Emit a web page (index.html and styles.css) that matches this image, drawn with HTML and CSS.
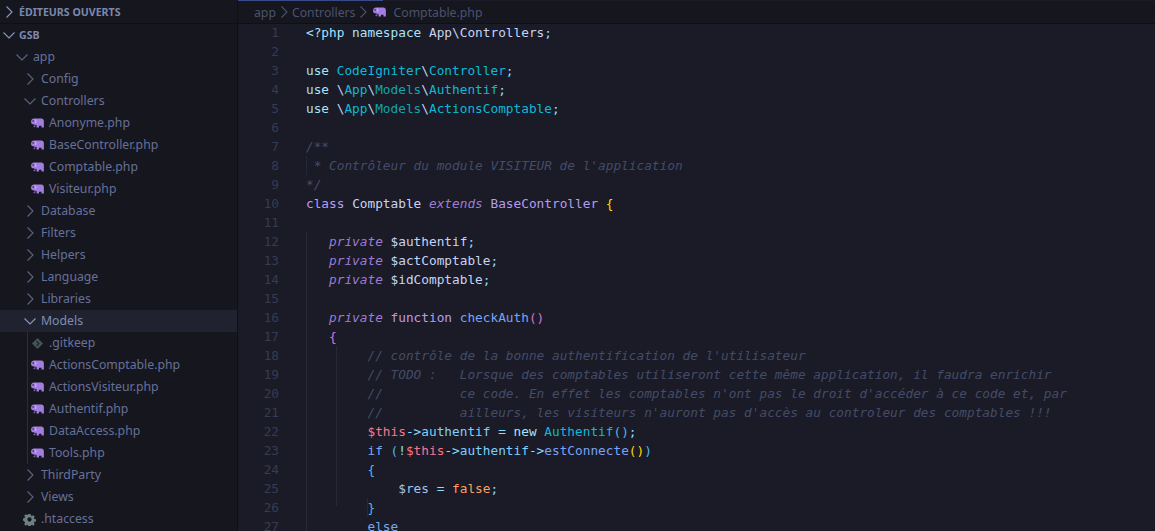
FILE: index.html
```html
<!DOCTYPE html>
<html lang="fr">
<head>
<meta charset="utf-8">
<title>GSB</title>
<link rel="stylesheet" href="styles.css">
</head>
<body>
<svg class="defs" width="0" height="0" aria-hidden="true">
  <defs>
    <symbol id="elephant" viewBox="0 0 14 11">
      <path d="M5 .5h6.2C12.8.5 14 1.7 14 3.3V10.5h-2.6V8.6H8.6v1.9H6V7.9C5.4 7.6 5 7.4 4.6 7.4V9c0 .7-.4 1.1-1.1 1.1S2.500 9.700 2.500 9.100h.8c0 .2 0 .3.200.3s.3-.1.300-.4V7.100C2 7.300.4 6.700 0 5.300V3.200C.1 1.500 1.600.5 3 .5z" fill="#a37ee0"/>
      <circle cx="2.200" cy="3.300" r=".8" fill="#16161e"/>
      <path d="M4.500 1.500C5.500 2.500 5.500 4.500 4.500 5.500" stroke="#d8c4ff" stroke-width=".9" fill="none"/>
    </symbol>
    <symbol id="chev-right" viewBox="0 0 16 16"><path d="M5.500 2.500 11 8l-5.500 5.500" fill="none" stroke="currentColor" stroke-width="1.100"/></symbol>
    <symbol id="chev-down" viewBox="0 0 16 16"><path d="M2.500 5.500 8 11l5.500-5.500" fill="none" stroke="currentColor" stroke-width="1.100"/></symbol>
  </defs>
</svg>
<div class="window">
  <aside class="sidebar">
    <div class="section-head open-editors">
      <svg class="chev bright"><use href="#chev-right"/></svg>
      <span>ÉDITEURS OUVERTS</span>
    </div>
    <div class="section-head root">
      <svg class="chev bright"><use href="#chev-down"/></svg>
      <span>GSB</span>
    </div>
    <ul class="tree">
      <li class="row d1"><svg class="chev"><use href="#chev-down"/></svg><span>app</span></li>
      <li class="row d2"><svg class="chev"><use href="#chev-right"/></svg><span>Config</span></li>
      <li class="row d2"><svg class="chev"><use href="#chev-down"/></svg><span>Controllers</span></li>
      <li class="row file"><svg class="ficon"><use href="#elephant"/></svg><span>Anonyme.php</span></li>
      <li class="row file"><svg class="ficon"><use href="#elephant"/></svg><span>BaseController.php</span></li>
      <li class="row file"><svg class="ficon"><use href="#elephant"/></svg><span>Comptable.php</span></li>
      <li class="row file"><svg class="ficon"><use href="#elephant"/></svg><span>Visiteur.php</span></li>
      <li class="row d2"><svg class="chev"><use href="#chev-right"/></svg><span>Database</span></li>
      <li class="row d2"><svg class="chev"><use href="#chev-right"/></svg><span>Filters</span></li>
      <li class="row d2"><svg class="chev"><use href="#chev-right"/></svg><span>Helpers</span></li>
      <li class="row d2"><svg class="chev"><use href="#chev-right"/></svg><span>Language</span></li>
      <li class="row d2"><svg class="chev"><use href="#chev-right"/></svg><span>Libraries</span></li>
      <li class="row d2 hover"><svg class="chev bright"><use href="#chev-down"/></svg><span>Models</span></li>
      <li class="group">
        <ul class="tree guided">
          <li class="row file"><svg class="ficon git" viewBox="0 0 14 14"><path d="M7 1l6 6-6 6-6-6z" fill="#3f5557"/><path d="M6 4.500l2.500 2.500L6 9.500" stroke="#1a2426" stroke-width="1.300" fill="none"/></svg><span>.gitkeep</span></li>
          <li class="row file"><svg class="ficon"><use href="#elephant"/></svg><span>ActionsComptable.php</span></li>
          <li class="row file"><svg class="ficon"><use href="#elephant"/></svg><span>ActionsVisiteur.php</span></li>
          <li class="row file"><svg class="ficon"><use href="#elephant"/></svg><span>Authentif.php</span></li>
          <li class="row file"><svg class="ficon"><use href="#elephant"/></svg><span>DataAccess.php</span></li>
          <li class="row file"><svg class="ficon"><use href="#elephant"/></svg><span>Tools.php</span></li>
        </ul>
      </li>
      <li class="row d2"><svg class="chev"><use href="#chev-right"/></svg><span>ThirdParty</span></li>
      <li class="row d2"><svg class="chev"><use href="#chev-right"/></svg><span>Views</span></li>
      <li class="row gear-row"><svg class="gear" viewBox="0 0 14 14"><path d="M5.800 1h2.400l.3 1.700 1 .5 1.500-.9 1.700 1.700-1 1.400.5 1 1.800.4v2.400l-1.800.3-.5 1.100 1 1.500-1.700 1.600-1.500-1-1 .5-.3 1.800H5.800l-.4-1.800-1-.5-1.400 1-1.700-1.600.9-1.500-.5-1.100L0 8.200V5.800l1.700-.4.500-1-.9-1.400L3 1.300l1.400.9 1-.5z" fill="#6d8086"/><circle cx="7" cy="7" r="2.300" fill="#16161e"/></svg><span>.htaccess</span></li>
    </ul>
  </aside>
  <main class="editor">
    <div class="progress"></div>
    <nav class="crumbs">
      <span>app</span><svg class="sep"><use href="#chev-right"/></svg>
      <span>Controllers</span><svg class="sep"><use href="#chev-right"/></svg>
      <svg class="ficon crumb-icon"><use href="#elephant"/></svg><span>Comptable.php</span>
    </nav>
    <div class="code-wrap">
      <ol class="gutter">
        <li>1</li><li>2</li><li>3</li><li>4</li><li>5</li><li>6</li><li>7</li><li>8</li><li>9</li>
        <li>10</li><li>11</li><li>12</li><li>13</li><li>14</li><li>15</li><li>16</li><li>17</li><li>18</li>
        <li>19</li><li>20</li><li>21</li><li>22</li><li>23</li><li>24</li><li>25</li><li>26</li><li>27</li>
      </ol>
      <div class="code">
        <i class="guide g-a"></i><i class="guide g-b"></i><i class="guide g-c"></i><i class="guide g-d"></i>
        <pre><span class="kw2">&lt;?php namespace</span> <span class="fg">App\Controllers</span><span class="op">;</span>

<span class="kw2">use</span> <span class="ty">CodeIgniter</span><span class="fg">\</span><span class="ty">Controller</span><span class="op">;</span>
<span class="kw2">use</span> <span class="fg">\</span><span class="ty">App</span><span class="fg">\</span><span class="ty2">Models</span><span class="fg">\</span><span class="ty">Authentif</span><span class="op">;</span>
<span class="kw2">use</span> <span class="fg">\</span><span class="ty">App</span><span class="fg">\</span><span class="ty2">Models</span><span class="fg">\</span><span class="ty">ActionsComptable</span><span class="op">;</span>

<span class="cm">/**
 * Contrôleur du module VISITEUR de l'application
*/</span>
<span class="kw">class</span> <span class="fg">Comptable</span> <span class="st">extends</span> <span class="cl">BaseController</span> <span class="gold">{</span>

   <span class="st">private</span> <span class="fg">$authentif</span><span class="op">;</span>
   <span class="st">private</span> <span class="fg">$actComptable</span><span class="op">;</span>
   <span class="st">private</span> <span class="fg">$idComptable</span><span class="op">;</span>

   <span class="st">private</span> <span class="kw">function</span> <span class="fn">checkAuth</span><span class="pink">()</span>
   <span class="pink">{</span>
        <span class="cm">// contrôle de la bonne authentification de l'utilisateur</span>
        <span class="cm">// TODO :   Lorsque des comptables utiliseront cette même application, il faudra enrichir</span>
        <span class="cm">//          ce code. En effet les comptables n'ont pas le droit d'accéder à ce code et, par</span>
        <span class="cm">//          ailleurs, les visiteurs n'auront pas d'accès au controleur des comptables !!!</span>
        <span class="th">$this</span><span class="op">-&gt;</span><span class="pr">authentif</span> <span class="op">=</span> <span class="kw2">new</span> <span class="ty">Authentif</span><span class="blue">()</span><span class="op">;</span>
        <span class="kw3">if</span> <span class="blue">(</span><span class="op">!</span><span class="th">$this</span><span class="op">-&gt;</span><span class="pr">authentif</span><span class="op">-&gt;</span><span class="fn">estConnecte</span><span class="gold">()</span><span class="blue">)</span>
        <span class="blue">{</span>
            <span class="fg2">$res</span> <span class="op">=</span> <span class="bool">false</span><span class="op">;</span>
        <span class="blue">}</span>
        <span class="kw3">else</span></pre>
      </div>
    </div>
  </main>
</div>
</body>
</html>
```
FILE: styles.css
```css
* { box-sizing: border-box; }
html, body { margin: 0; height: 100%; background: #1a1b26; overflow: hidden; }
ul, ol { list-style: none; margin: 0; padding: 0; }
.defs { position: absolute; }

.window { display: flex; height: 531px; overflow: hidden; }

.sidebar {
  width: 238px;
  flex: none;
  background: #16161e;
  border-right: 1px solid #101014;
  font: 12.25px/22px "Noto Sans", sans-serif;
  color: #66719a;
  overflow: hidden;
}
.section-head {
  display: flex;
  align-items: center;
  height: 22px;
  font-weight: 700;
  font-size: 10.6px;
  color: #7c88ad;
}
.open-editors { height: 24px; padding: 1px 0 0 1px; border-bottom: 1px solid #0f0f14; gap: 2px; }
.root { padding-left: 1px; gap: 2px; }
.row { display: flex; align-items: center; height: 22px; white-space: nowrap; }
.d1 { padding-left: 14px; gap: 3px; }
.d2 { padding-left: 22px; gap: 3px; }
.file { padding-left: 31px; gap: 5px; }
.hover { background: #20232f; color: #7f8cb4; }
.gear-row { gap: 5px; padding-left: 23px; }
.group { display: block; }
.guided { border-left: 1px solid #2a2d3c; margin-left: 27px; }
.guided .file { padding-left: 3px; }

.chev { width: 16px; height: 16px; flex: none; color: #5c6483; }
.chev.bright { color: #8a96bb; }
.ficon { width: 13px; height: 10px; flex: none; }
.ficon.git { height: 13px; }
.gear { width: 13px; height: 13px; flex: none; }

.editor { flex: 1; min-width: 0; display: flex; flex-direction: column; }
.progress { height: 1px; width: 145px; background: #3a4a86; flex: none; }
.crumbs {
  height: 22px;
  flex: none;
  display: flex;
  align-items: center;
  padding-left: 16px;
  font: 12.25px "Noto Sans", sans-serif;
  color: #4b526e;
  background: #16161e;
  box-shadow: 0 1px 0 #101014;
}
.sep { width: 16px; height: 16px; color: #4b526e; margin: 0; flex: none; }
.crumb-icon { margin: 0 7px 0 2px; }

.code-wrap { flex: 1; display: flex; padding-top: 0; font: 12.77px/19px "DejaVu Sans Mono", monospace; }
.gutter { width: 47px; flex: none; margin-left: -6px; text-align: right; color: #363b54; padding-top: 0; }
.gutter li { height: 19px; }
.code { position: relative; margin-left: 27px; flex: 1; }
pre { margin: 0; font: inherit; color: #c0caf5; }

.guide { position: absolute; width: 1px; background: #262836; }
.g-a { left: 0; top: 133px; height: 19px; }
.g-b { left: 0; top: 209px; height: 300px; }
.g-c { left: 30px; top: 323px; height: 160px; }
.g-d { left: 61px; top: 475px; height: 19px; }

.fg { color: #c8d3f5; }
.fg2 { color: #a9c1ee; }
.op { color: #89ddff; }
.kw { color: #bb9af7; }
.kw2 { color: #a6e3ff; }
.kw3 { color: #7aa8f0; }
.ty { color: #0db9d7; }
.ty2 { color: #10a5ad; }
.cl { color: #b39cf0; }
.st { color: #9d7cd8; font-style: italic; }
.cm { color: #444b6a; font-style: italic; }
.fn { color: #7aa2f7; }
.pr { color: #7dcfff; }
.th { color: #f7768e; }
.bool { color: #ff9e64; }
.gold { color: #ffd700; }
.pink { color: #da70d6; }
.blue { color: #4fb4e8; }
```
